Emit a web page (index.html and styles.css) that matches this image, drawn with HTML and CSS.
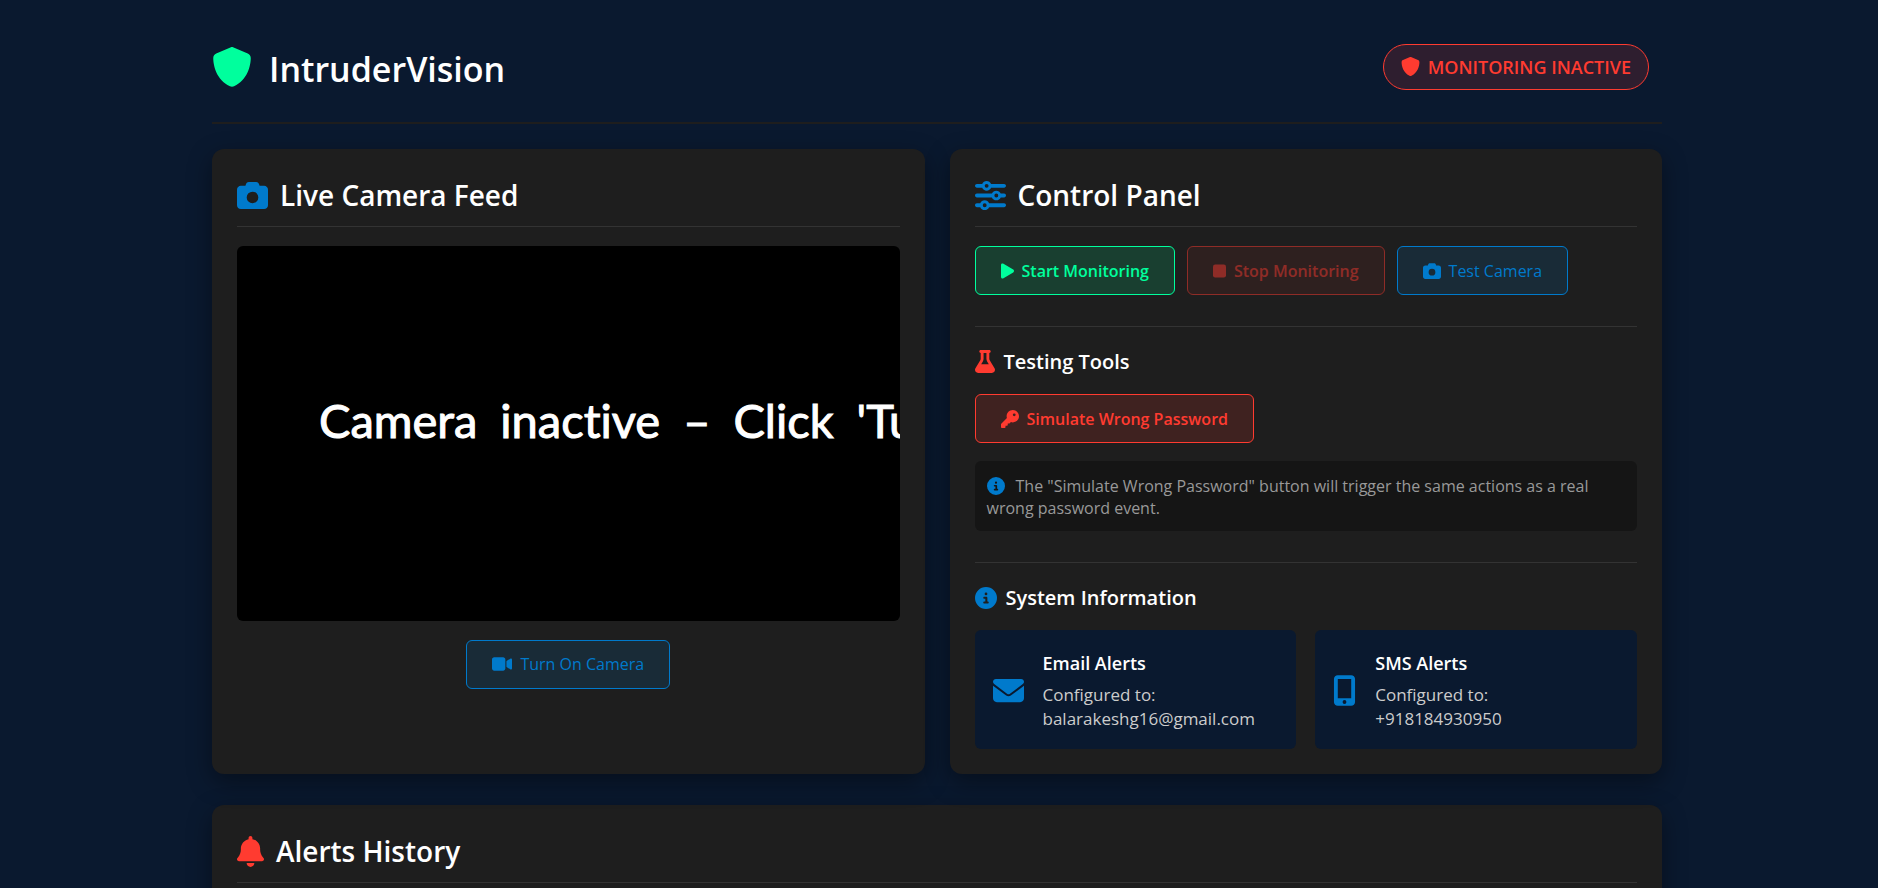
FILE: index.html
```
<!DOCTYPE html>
<html lang="en">
<head>
<meta charset="utf-8">
<title>IntruderVision</title>
<link rel="stylesheet" href="styles.css">
</head>
<body>
<svg class="sprite" aria-hidden="true">
  <symbol id="shield" viewBox="0 0 512 512"><path d="M269.4 2.9C265.2 1 260.7 0 256 0s-9.2 1-13.4 2.9L54.3 82.8c-22 9.3-38.4 31-38.3 57.2c.5 99.2 41.3 280.7 213.6 363.2c16.7 8 36.1 8 52.8 0C454.7 420.7 495.5 239.2 496 140c.1-26.2-16.3-47.9-38.3-57.2L269.4 2.9z"/></symbol>
  <symbol id="camera" viewBox="0 0 512 512"><path d="M149.1 64.8L138.7 96H64C28.7 96 0 124.7 0 160V416c0 35.3 28.7 64 64 64H448c35.3 0 64-28.7 64-64V160c0-35.3-28.7-64-64-64H373.3L362.9 64.8C356.4 45.2 338.1 32 317.4 32H194.6c-20.7 0-39 13.2-45.5 32.8zM256 192a96 96 0 1 1 0 192 96 96 0 1 1 0-192z"/></symbol>
  <symbol id="video" viewBox="0 0 576 512"><path d="M0 128C0 92.7 28.7 64 64 64H320c35.3 0 64 28.7 64 64V384c0 35.3-28.7 64-64 64H64c-35.3 0-64-28.7-64-64V128zM559.1 99.8c10.4 5.6 16.9 16.4 16.9 28.2V384c0 11.8-6.5 22.6-16.9 28.2s-23 5-32.9-1.6l-96-64L416 337.1V320 192 174.9l14.2-9.5 96-64c9.8-6.5 22.4-7.2 32.9-1.6z"/></symbol>
  <symbol id="play" viewBox="0 0 384 512"><path d="M73 39c-14.8-9.1-33.4-9.4-48.5-.9S0 62.6 0 80V432c0 17.4 9.4 33.4 24.5 41.9s33.7 8.1 48.5-.9L361 297c14.3-8.7 23-24.2 23-41s-8.7-32.2-23-41L73 39z"/></symbol>
  <symbol id="stop" viewBox="0 0 384 512"><rect y="64" width="384" height="384" rx="64"/></symbol>
  <symbol id="sliders" viewBox="0 0 512 512"><path d="M0 416c0 17.7 14.3 32 32 32l54.7 0c12.3 28.3 40.5 48 73.3 48s61-19.7 73.3-48L480 448c17.7 0 32-14.3 32-32s-14.3-32-32-32l-246.7 0c-12.3-28.3-40.5-48-73.3-48s-61 19.7-73.3 48L32 384c-17.7 0-32 14.3-32 32zm128 0a32 32 0 1 1 64 0 32 32 0 1 1 -64 0zM320 256a32 32 0 1 1 64 0 32 32 0 1 1 -64 0zm32-80c-32.8 0-61 19.7-73.3 48L32 224c-17.7 0-32 14.3-32 32s14.3 32 32 32l246.7 0c12.3 28.3 40.5 48 73.3 48s61-19.7 73.3-48l54.7 0c17.7 0 32-14.3 32-32s-14.3-32-32-32l-54.7 0c-12.3-28.3-40.5-48-73.3-48zM192 128a32 32 0 1 1 0-64 32 32 0 1 1 0 64zm73.3-64C253 35.7 224.8 16 192 16s-61 19.7-73.3 48L32 64C14.3 64 0 78.3 0 96s14.3 32 32 32l86.7 0c12.3 28.3 40.5 48 73.3 48s61-19.7 73.3-48L480 128c17.7 0 32-14.3 32-32s-14.3-32-32-32L265.3 64z"/></symbol>
  <symbol id="flask" viewBox="0 0 448 512"><path d="M288 0H160 128C110.3 0 96 14.3 96 32s14.3 32 32 32V196.8c0 11.8-3.3 23.5-9.5 33.5L10.3 406.2C3.6 417.2 0 429.7 0 442.6C0 480.9 31.1 512 69.4 512H378.6c38.3 0 69.4-31.1 69.4-69.4c0-12.8-3.6-25.4-10.3-36.4L329.5 230.4c-6.2-10.1-9.5-21.7-9.5-33.5V64c17.7 0 32-14.3 32-32s-14.3-32-32-32H288zM192 196.8V64h64V196.8c0 23.7 6.6 46.9 19 67.1L309.5 320h-171L173 263.9c12.4-20.2 19-43.4 19-67.1z"/></symbol>
  <symbol id="key" viewBox="0 0 512 512"><path d="M336 352c97.2 0 176-78.8 176-176S433.2 0 336 0S160 78.8 160 176c0 18.7 2.9 36.8 8.3 53.7L7 391c-4.5 4.5-7 10.6-7 17v80c0 13.3 10.7 24 24 24h80c13.3 0 24-10.7 24-24V448h40c13.3 0 24-10.7 24-24V384h40c6.4 0 12.5-2.5 17-7l33.3-33.3c16.9 5.4 35 8.3 53.7 8.3zM376 96a40 40 0 1 1 0 80 40 40 0 1 1 0-80z"/></symbol>
  <symbol id="info" viewBox="0 0 512 512"><path d="M256 512A256 256 0 1 0 256 0a256 256 0 1 0 0 512zM216 336h24V272H216c-13.3 0-24-10.7-24-24s10.7-24 24-24h48c13.3 0 24 10.7 24 24v88h8c13.3 0 24 10.7 24 24s-10.7 24-24 24H216c-13.3 0-24-10.7-24-24s10.7-24 24-24zm40-208a32 32 0 1 1 0 64 32 32 0 1 1 0-64z"/></symbol>
  <symbol id="envelope" viewBox="0 0 512 512"><path d="M48 64C21.5 64 0 85.5 0 112c0 15.1 7.1 29.3 19.2 38.4L236.8 313.6c11.4 8.5 27 8.5 38.4 0L492.8 150.4c12.1-9.1 19.2-23.3 19.2-38.4c0-26.5-21.5-48-48-48H48zM0 176V384c0 35.3 28.7 64 64 64H448c35.3 0 64-28.7 64-64V176L294.4 339.2c-22.8 17.1-54 17.1-76.8 0L0 176z"/></symbol>
  <symbol id="mobile" viewBox="0 0 384 512"><path d="M16 64C16 28.7 44.7 0 80 0H304c35.3 0 64 28.7 64 64V448c0 35.3-28.7 64-64 64H80c-35.3 0-64-28.7-64-64V64zM224 448a32 32 0 1 0 -64 0 32 32 0 1 0 64 0zM304 64H80V384H304V64z"/></symbol>
  <symbol id="bell" viewBox="0 0 448 512"><path d="M224 0c-17.7 0-32 14.3-32 32V51.2C119 66 64 130.6 64 208v18.8c0 47-17.3 92.4-48.5 127.6l-7.4 8.3c-8.4 9.4-10.4 22.9-5.3 34.4S19.4 416 32 416H416c12.6 0 24-7.4 29.2-18.9s3.1-25-5.3-34.4l-7.4-8.3C401.3 319.2 384 273.9 384 226.8V208c0-77.4-55-142-128-156.8V32c0-17.7-14.3-32-32-32zm45.3 493.3c12-12 18.7-28.3 18.7-45.3H224 160c0 17 6.7 33.3 18.7 45.3s28.3 18.7 45.3 18.7s33.3-6.7 45.3-18.7z"/></symbol>
</svg>

<div class="container">
  <header class="header">
    <div class="logo">
      <svg class="logo-icon" aria-hidden="true"><use href="#shield"/></svg>
      <h1>IntruderVision</h1>
    </div>
    <div class="status">
      <svg class="status-icon" aria-hidden="true"><use href="#shield"/></svg>
      <span>MONITORING INACTIVE</span>
    </div>
  </header>

  <main>
    <div class="grid">
      <section class="card">
        <h2 class="card-title"><svg class="icon-lg blue" aria-hidden="true"><use href="#camera"/></svg>Live Camera Feed</h2>
        <div class="feed"><span>Camera</span><span>inactive</span><span>–</span><span>Click</span><span>'Tu</span></div>
        <div class="feed-controls">
          <button type="button" class="btn btn-blue"><svg class="icon-btn wide" aria-hidden="true"><use href="#video"/></svg>Turn On Camera</button>
        </div>
      </section>

      <section class="card">
        <h2 class="card-title"><svg class="icon-lg blue" aria-hidden="true"><use href="#sliders"/></svg>Control Panel</h2>
        <div class="actions">
          <button type="button" class="btn btn-green"><svg class="icon-btn slim" aria-hidden="true"><use href="#play"/></svg>Start Monitoring</button>
          <button type="button" class="btn btn-stop" disabled><svg class="icon-btn slim" aria-hidden="true"><use href="#stop"/></svg>Stop Monitoring</button>
          <button type="button" class="btn btn-blue"><svg class="icon-btn" aria-hidden="true"><use href="#camera"/></svg>Test Camera</button>
        </div>

        <div class="block">
          <h3><svg class="icon-flask red" aria-hidden="true"><use href="#flask"/></svg>Testing Tools</h3>
          <button type="button" class="btn btn-red"><svg class="icon-btn" aria-hidden="true"><use href="#key"/></svg>Simulate Wrong Password</button>
          <p class="note"><svg class="icon-note blue" aria-hidden="true"><use href="#info"/></svg>The "Simulate Wrong Password" button will trigger the same actions as a real wrong password event.</p>
        </div>

        <div class="block">
          <h3><svg class="icon-md blue" aria-hidden="true"><use href="#info"/></svg>System Information</h3>
          <div class="info-grid">
            <div class="info-card">
              <svg class="icon-lg blue" aria-hidden="true"><use href="#envelope"/></svg>
              <div>
                <h4>Email Alerts</h4>
                <p>Configured to: balarakeshg16@gmail.com</p>
              </div>
            </div>
            <div class="info-card">
              <svg class="icon-phone blue" aria-hidden="true"><use href="#mobile"/></svg>
              <div>
                <h4>SMS Alerts</h4>
                <p>Configured to:<br>+918184930950</p>
              </div>
            </div>
          </div>
        </div>
      </section>
    </div>

    <section class="card">
      <h2 class="card-title"><svg class="icon-bell red" aria-hidden="true"><use href="#bell"/></svg>Alerts History</h2>
    </section>
  </main>
</div>
</body>
</html>
```
FILE: styles.css
```
* {
  box-sizing: border-box;
  margin: 0;
  padding: 0;
}

:root {
  --navy: #0a192f;
  --panel: #1e1e1e;
  --blue: #007acc;
  --green: #00ff9d;
  --red: #ff3b30;
  --line: #333;
}

html {
  height: 100%;
  overflow: hidden;
  background: var(--navy);
}

body {
  padding-right: 4px;
  color: #fff;
  font-family: "Open Sans", "Noto Sans", sans-serif;
  font-size: 16px;
  line-height: 24px;
}

.sprite {
  display: none;
}

svg {
  flex: none;
  fill: currentColor;
}

.container {
  max-width: 1500px;
  margin: 0 auto;
  padding: 25px;
}

.header {
  display: flex;
  justify-content: space-between;
  align-items: center;
  height: 99px;
  margin-bottom: 25px;
  padding: 0 13px 14px 0;
  border-bottom: 2px solid var(--panel);
}

.logo {
  display: flex;
  align-items: center;
  gap: 17px;
}

.logo-icon {
  width: 40px;
  height: 40px;
  color: var(--green);
}

h1 {
  padding-top: 4px;
  font-size: 34px;
  line-height: 48px;
  font-weight: 600;
}

h2, h3, h4 {
  font-weight: 600;
}

.status {
  display: flex;
  align-items: center;
  gap: 8px;
  height: 46px;
  padding: 0 17px;
  border: 1px solid var(--red);
  border-radius: 23px;
  background: rgba(255, 59, 48, 0.15);
  color: var(--red);
  font-size: 18px;
  font-weight: 600;
}

.status-icon {
  width: 19px;
  height: 19px;
}

.grid {
  display: grid;
  grid-template-columns: repeat(2, minmax(0, 1fr));
  gap: 25px;
  margin-bottom: 31px;
}

.card {
  padding: 25px;
  border-radius: 12px;
  background: var(--panel);
  box-shadow: 0 8px 24px rgba(0, 0, 0, 0.4);
}

.card-title {
  display: flex;
  align-items: center;
  gap: 12px;
  margin-bottom: 19px;
  padding: 1px 0 11px;
  border-bottom: 1px solid var(--line);
  font-size: 28px;
  line-height: 40px;
}

.blue { color: var(--blue); }
.red { color: var(--red); }

.icon-lg { width: 31px; height: 31px; }
.icon-md { width: 22px; height: 22px; }
.icon-bell { width: 27px; height: 31px; }
.icon-flask { width: 20px; height: 23px; }
.icon-phone { width: 23px; height: 31px; }

.feed {
  display: flex;
  align-items: center;
  gap: 23px;
  aspect-ratio: 663 / 375;
  padding: 0 0 26px 82px;
  overflow: hidden;
  border-radius: 6px;
  background: #000;
  font-family: Lato, "Liberation Sans", sans-serif;
  font-size: 47px;
  line-height: 50px;
  font-variant-ligatures: none;
  white-space: nowrap;
  -webkit-text-stroke: 1px #fff;
}

.feed-controls {
  display: flex;
  justify-content: center;
  margin-top: 19px;
}

.btn {
  display: inline-flex;
  align-items: center;
  gap: 8px;
  height: 49px;
  padding: 0 25px;
  border: 1px solid currentColor;
  border-radius: 6px;
  font-family: inherit;
  font-size: 16px;
  font-weight: 600;
  cursor: pointer;
}

.icon-btn { width: 18px; height: 18px; }
.icon-btn.wide { width: 20px; }
.icon-btn.slim { width: 13px; }

.btn-blue {
  background: rgba(0, 122, 204, 0.15);
  color: var(--blue);
  font-weight: 500;
}

.btn-green {
  background: rgba(0, 255, 157, 0.15);
  color: var(--green);
}

.btn-red {
  background: rgba(255, 59, 48, 0.15);
  color: var(--red);
}

.btn-stop {
  background: rgba(255, 59, 48, 0.15);
  color: var(--red);
  opacity: 0.5;
  cursor: not-allowed;
}

.actions {
  display: flex;
  flex-wrap: wrap;
  gap: 12px;
}

.block {
  margin-top: 31px;
  padding-top: 19px;
  border-top: 1px solid var(--line);
}

h3 {
  display: flex;
  align-items: center;
  gap: 9px;
  margin-bottom: 17px;
  font-size: 20px;
  line-height: 31px;
}

.note {
  margin-top: 18px;
  padding: 14px 12px 12px;
  border-radius: 6px;
  background: #151515;
  color: #999;
  font-size: 16px;
  line-height: 22px;
}

.icon-note {
  width: 18px;
  height: 18px;
  margin-right: 11px;
  vertical-align: -3px;
}

.info-grid {
  display: grid;
  grid-template-columns: repeat(2, minmax(0, 1fr));
  gap: 19px;
}

.info-card {
  display: flex;
  align-items: center;
  gap: 19px;
  padding: 20px 18px 18px;
  border-radius: 6px;
  background: var(--navy);
}

h4 {
  margin-bottom: 6px;
  font-size: 18px;
  line-height: 27px;
}

.info-card p {
  color: #ccc;
  font-size: 17px;
}
```
